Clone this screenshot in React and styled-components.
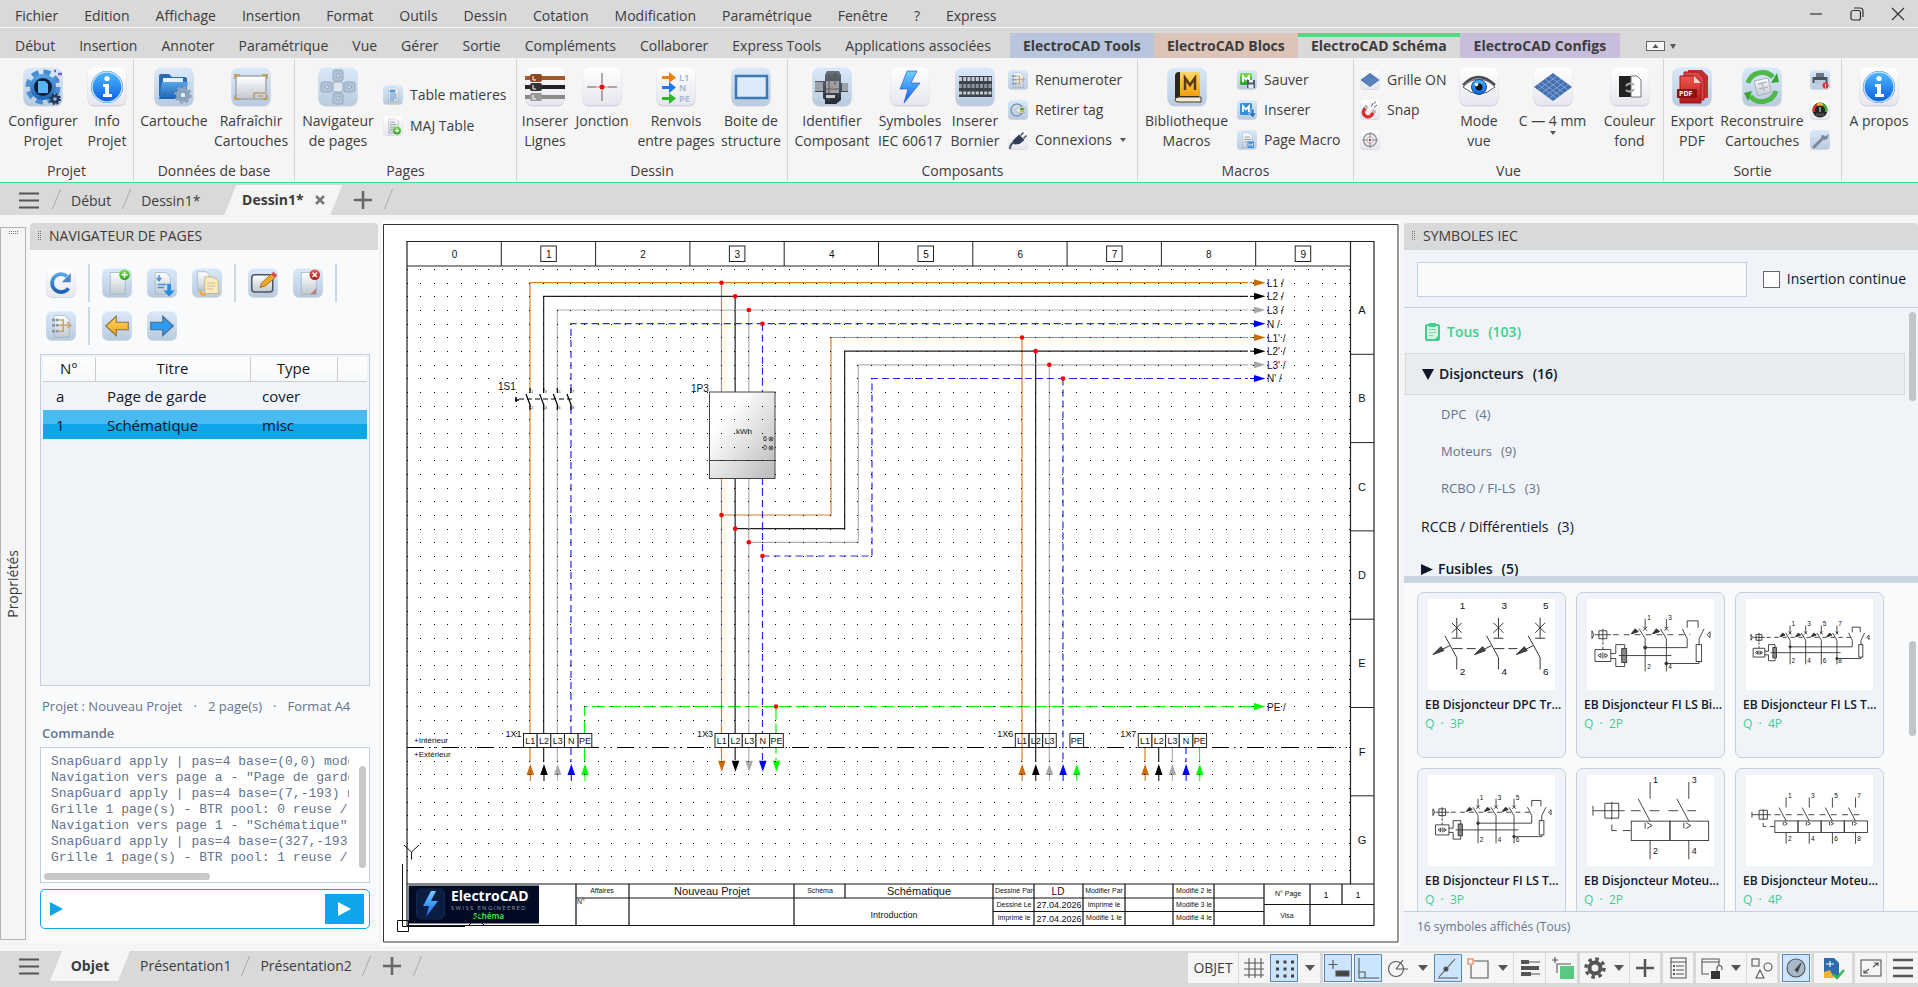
/* eslint-disable react/prop-types */
import { Fragment } from "react";
import styled, { createGlobalStyle, css } from "styled-components";

const menus = [
  "Fichier", "Edition", "Affichage", "Insertion", "Format", "Outils", "Dessin",
  "Cotation", "Modification", "Paramétrique", "Fenêtre", "?", "Express",
];

const ribbonTabs = [
  "Début", "Insertion", "Annoter", "Paramétrique", "Vue", "Gérer", "Sortie",
  "Compléments", "Collaborer", "Express Tools", "Applications associées",
];

const contextTabs = [
  { label: "ElectroCAD Tools", color: "#b9c5dc", width: 144 },
  { label: "ElectroCAD Blocs", color: "#dcc5b8", width: 144 },
  { label: "ElectroCAD Schéma", color: "#d9d9d9", width: 162, active: true },
  { label: "ElectroCAD Configs", color: "#c8bedb", width: 160 },
];

// big: [icon, line 1, line 2, width, dropdown], small: [icon, label, dropdown]
const ribbonGroups = [
  {
    title: "Projet",
    width: 134,
    items: [
      { big: ["config", "Configurer", "Projet", 82] },
      { big: ["info", "Info", "Projet", 46] },
    ],
  },
  {
    title: "Données de base",
    width: 161,
    items: [
      { big: ["folder", "Cartouche", "", 76] },
      { big: ["frame", "Rafraîchir", "Cartouches", 78] },
    ],
  },
  {
    title: "Pages",
    width: 222,
    items: [
      { big: ["navpad", "Navigateur", "de pages", 82] },
      { small: [["doc", "Table matieres"], ["docplus", "MAJ Table"]] },
    ],
  },
  {
    title: "Dessin",
    width: 271,
    items: [
      { big: ["lines", "Inserer", "Lignes", 52] },
      { big: ["cross", "Jonction", "", 62] },
      { big: ["refs", "Renvois", "entre pages", 86] },
      { big: ["box", "Boite de", "structure", 64] },
    ],
  },
  {
    title: "Composants",
    width: 350,
    items: [
      { big: ["component", "Identifier", "Composant", 84] },
      { big: ["bolt", "Symboles", "IEC 60617", 72] },
      { big: ["terminal", "Inserer", "Bornier", 58] },
      {
        small: [
          ["renum", "Renumeroter"],
          ["tag", "Retirer tag"],
          ["plug", "Connexions", true],
        ],
      },
    ],
  },
  {
    title: "Macros",
    width: 216,
    items: [
      { big: ["book", "Bibliotheque", "Macros", 93] },
      { small: [["msave", "Sauver"], ["minsert", "Inserer"], ["mpage", "Page Macro"]] },
    ],
  },
  {
    title: "Vue",
    width: 310,
    items: [
      { small: [["grid", "Grille ON"], ["magnet", "Snap"], ["target", ""]], width: 96 },
      { big: ["eye", "Mode", "vue", 56] },
      { big: ["grid", "C — 4 mm", "", 91, true] },
      { big: ["contrast", "Couleur", "fond", 63] },
    ],
  },
  {
    title: "Sortie",
    width: 178,
    items: [
      { big: ["pdf", "Export", "PDF", 52] },
      { big: ["recycle", "Reconstruire", "Cartouches", 88] },
      { small: [["printer", ""], ["gauge", ""], ["wrench", ""]] },
    ],
  },
  { title: "", items: [{ big: ["info", "A propos", "", 70] }] },
];

const iconLabels = {
  target: "Cible", printer: "Imprimer", gauge: "Performance", wrench: "Réparer",
};

const pageTools = [
  [["refresh", "Rafraîchir"]],
  [["newpage", "Nouvelle page"], ["importpage", "Importer"], ["copypage", "Copier"]],
  [["editpage", "Modifier"], ["delpage", "Supprimer"]],
];

const pageToolsRow2 = [
  [["renum", "Renuméroter"]],
  [["left", "Page précédente"], ["right", "Page suivante"]],
];

const log = `SnapGuard apply | pas=4 base=(0,0) mode=auto
Navigation vers page a - "Page de garde"
SnapGuard apply | pas=4 base=(7,-193) mode=auto
Grille 1 page(s) - BTR pool: 0 reuse / 1 new
Navigation vers page 1 - "Schématique"
SnapGuard apply | pas=4 base=(327,-193) mode=auto
Grille 1 page(s) - BTR pool: 1 reuse / 0 new`;

const categories = [
  { label: "Tous", count: 103, kind: "all" },
  { label: "Disjoncteurs", count: 16, kind: "open" },
  { label: "DPC", count: 4, kind: "sub" },
  { label: "Moteurs", count: 9, kind: "sub" },
  { label: "RCBO / FI-LS", count: 3, kind: "sub" },
  { label: "RCCB / Différentiels", count: 3, kind: "leaf" },
  { label: "Fusibles", count: 5, kind: "closed" },
];

const symbols = [
  { name: "EB Disjoncteur DPC Tripolaire", code: "Q  ·  3P", art: <DpcSymbol /> },
  { name: "EB Disjoncteur FI LS Bipolaire", code: "Q  ·  2P", art: <FiSymbol poles={2} /> },
  { name: "EB Disjoncteur FI LS Tetrapolaire", code: "Q  ·  4P", art: <FiSymbol poles={4} /> },
  { name: "EB Disjoncteur FI LS Tripolaire", code: "Q  ·  3P", art: <FiSymbol poles={3} /> },
  { name: "EB Disjoncteur Moteur Bipolaire", code: "Q  ·  2P", art: <MotorSymbol poles={2} /> },
  { name: "EB Disjoncteur Moteur Tetrapolaire", code: "Q  ·  4P", art: <MotorSymbol poles={4} /> },
];

export default function App() {
  return (
    <Shell>
      <GlobalStyle />
      <Gradients />
      <MenuBar>
        {menus.map((m) => (
          <MenuButton key={m}>{m}</MenuButton>
        ))}
        <WindowButtons>
          <button aria-label="Réduire">
            <svg width="14" height="14"><path d="M1 7h12" /></svg>
          </button>
          <button aria-label="Restaurer">
            <svg width="14" height="14">
              <rect x="1" y="3.5" width="9.5" height="9.5" rx="2" />
              <path d="M4 1h6q3 0 3 3v6" />
            </svg>
          </button>
          <button aria-label="Fermer">
            <svg width="14" height="14"><path d="M1 1l12 12M13 1L1 13" /></svg>
          </button>
        </WindowButtons>
      </MenuBar>
      <TabBar>
        {ribbonTabs.map((t) => (
          <MenuButton key={t} $tight>{t}</MenuButton>
        ))}
        <ContextTabs>
          {contextTabs.map((t) => (
            <ContextTab key={t.label} $color={t.color} $width={t.width} $active={t.active}>
              {t.label}
            </ContextTab>
          ))}
        </ContextTabs>
        <CollapseButton aria-label="Réduire le ruban">
          <svg width="32" height="12">
            <rect x=".5" y="1.5" width="18" height="9" fill="#f5f5f5" stroke="#666" />
            <path d="M9.500 4l3 4h-6z" fill="#555" />
            <path d="M24 4h6l-3 5z" fill="#555" />
          </svg>
        </CollapseButton>
      </TabBar>
      <Ribbon>
        {ribbonGroups.map((g) => (
          <RibbonGroup key={g.title} $width={g.width}>
            <GroupItems>
              {g.items.map((it, i) =>
                it.big ? (
                  <BigItem key={i} data={it.big} />
                ) : (
                  <SmallItems key={i} list={it.small} width={it.width} />
                )
              )}
            </GroupItems>
            <GroupTitle>{g.title}</GroupTitle>
          </RibbonGroup>
        ))}
      </Ribbon>
      <DocTabs>
        <Burger />
        <Slash />
        <DocTab>Début</DocTab>
        <Slash />
        <DocTab $wide>Dessin1*</DocTab>
        <ActiveDocTab>
          <button>Dessin1*</button>
          <button aria-label="Fermer l'onglet">
            <svg width="10" height="10" stroke="#777" strokeWidth="2.500">
              <path d="M1 1l8 8M9 1l-8 8" />
            </svg>
          </button>
        </ActiveDocTab>
        <PlusButton />
        <Slash />
      </DocTabs>

      <Workspace>
        <PropertiesStrip>
          <Grip $width={9} $height={4} />
          <span>Propriétés</span>
        </PropertiesStrip>
        <PageNavigator />
        <Canvas>
          <Schematic />
        </Canvas>
        <SymbolPanel />
      </Workspace>

      <Footer>
        <Burger />
        <LayoutTab $active>Objet</LayoutTab>
        <LayoutTab>Présentation1</LayoutTab>
        <Slash />
        <LayoutTab>Présentation2</LayoutTab>
        <Slash />
        <PlusButton />
        <Slash />
        <StatusTools />
      </Footer>
    </Shell>
  );
}

/****************** ribbon ***************/

function BigItem({ data }) {
  const [icon, line1, line2, width, dropdown] = data;
  return (
    <BigButton $width={width}>
      <Icon name={icon} size={40} />
      <span>{line1}</span>
      {line2 && <span>{line2}</span>}
      {dropdown && <Caret />}
    </BigButton>
  );
}

function SmallItems({ list, width }) {
  return (
    <SmallColumn $width={width} $two={list.length === 2}>
      {list.map(([icon, label, dropdown]) => (
        <SmallButton key={icon} aria-label={label || iconLabels[icon]}>
          <Icon name={icon} size={20} />
          {label}
          {dropdown && <Caret />}
        </SmallButton>
      ))}
    </SmallColumn>
  );
}

function Caret() {
  return (
    <svg width="8" height="5">
      <path d="M1 0h6L4 4z" fill="#555" />
    </svg>
  );
}

function Burger() {
  return (
    <BurgerButton aria-label="Menu">
      <svg width="20" height="17" stroke="#555" strokeWidth="2">
        <path d="M0 1.500h20M0 8.500h20M0 15.500h20" />
      </svg>
    </BurgerButton>
  );
}

function Slash() {
  return (
    <SlashSvg width="9" height="20" stroke="#aaa">
      <path d="M8.500 0L.5 20" />
    </SlashSvg>
  );
}

function PlusButton() {
  return (
    <PlusBtn aria-label="Nouvel onglet">
      <svg width="18" height="18" stroke="#666" strokeWidth="2.500">
        <path d="M9 0v18M0 9h18" />
      </svg>
    </PlusBtn>
  );
}

/****************** page navigator ***************/

function PageNavigator() {
  return (
    <Panel>
      <PanelHeader>
        <Grip $width={4} $height={10} />
        NAVIGATEUR DE PAGES
      </PanelHeader>
      <NavBody>
        {[pageTools, pageToolsRow2].map((row, r) => (
          <ToolRow key={r}>
            {row.map((set, i) => (
              <Fragment key={i}>
                {set.map(([icon, label]) => (
                  <ToolButton key={icon} aria-label={label}>
                    <Icon name={icon} size={30} />
                  </ToolButton>
                ))}
                {(r === 0 || i === 0) && <ToolSep />}
              </Fragment>
            ))}
          </ToolRow>
        ))}
        <TableFrame>
          <PageTable>
            <thead>
              <tr>
                <th>N°</th>
                <th>Titre</th>
                <th>Type</th>
                <th aria-label="Divers" />
              </tr>
            </thead>
            <tbody>
              <tr>
                <td>a</td>
                <td>Page de garde</td>
                <td colSpan="2">cover</td>
              </tr>
              <tr className="selected">
                <td>1</td>
                <td>Schématique</td>
                <td colSpan="2">misc</td>
              </tr>
            </tbody>
          </PageTable>
        </TableFrame>
        <ProjectLine>
          <span>Projet : Nouveau Projet</span>
          <span>·</span>
          <span>2 page(s)</span>
          <span>·</span>
          <span>Format A4</span>
        </ProjectLine>
        <CommandLabel htmlFor="command">Commande</CommandLabel>
        <LogFrame>
          <Log>{log}</Log>
          <VThumb />
          <HThumb />
        </LogFrame>
        <CommandBar>
          <svg width="13" height="14"><path d="M0 0l13 7-13 7z" fill="#0ea5e9" /></svg>
          <input id="command" />
          <button aria-label="Exécuter">
            <svg width="13" height="14"><path d="M0 0l13 7-13 7z" fill="#fff" /></svg>
          </button>
        </CommandBar>
      </NavBody>
    </Panel>
  );
}

/****************** symbols ***************/

function SymbolPanel() {
  return (
    <Panel $wide>
      <PanelHeader>
        <Grip $width={4} $height={10} />
        SYMBOLES IEC
      </PanelHeader>
      <SearchRow>
        <input type="text" aria-label="Rechercher un symbole" />
        <label>
          <input type="checkbox" />
          Insertion continue
        </label>
      </SearchRow>
      <Tree>
        {categories.map((c) => (
          <TreeRow key={c.label} $kind={c.kind}>
            {c.kind === "all" && (
              <svg width="15" height="18" viewBox="0 0 15 18">
                <rect x="1" y="2" width="13" height="15" rx="1" fill="#d5f3e2" stroke="#3ecf8e" strokeWidth="2" />
                <rect x="4" y="0" width="7" height="4" rx="1" fill="#3ecf8e" />
                <path d="M4 6.500h7M4 9.500h7M4 12.500h4" stroke="#7cd9a8" />
                <path d="M10 16l4-4v4z" fill="#3ecf8e" />
              </svg>
            )}
            {c.kind === "open" && (
              <svg width="12" height="11"><path d="M0 0h12L6 11z" fill="#0f172a" /></svg>
            )}
            {c.kind === "closed" && (
              <svg width="12" height="11"><path d="M0 0l12 5.500L0 11z" fill="#0f172a" /></svg>
            )}
            <span>{c.label}</span>
            <span>({c.count})</span>
          </TreeRow>
        ))}
        <ScrollThumb $top={4} $height={89} />
      </Tree>
      <Splitter />
      <Gallery>
        <Cards>
          {symbols.map((s) => (
            <Card key={s.name}>
              <svg viewBox="0 0 128 92">{s.art}</svg>
              <strong>{s.name}</strong>
              <small>{s.code}</small>
            </Card>
          ))}
        </Cards>
        <ScrollThumb $top={58} $height={95} />
      </Gallery>
      <PanelStatus>16 symboles affichés (Tous)</PanelStatus>
    </Panel>
  );
}

function DpcSymbol() {
  return (
    <g fill="none" stroke="#333" fontSize="10">
      {[29, 71, 113].map((x, i) => (
        <g key={x}>
          <path d={`M${x} 19v20M${x - 5} 24l10 10M${x + 5} 24l-10 10M${x - 5} 39.500h10`} />
          <path d={`M${x - 12} 37L${x} 59v12M${x - 7} 47l-10 5`} />
          <path d={`M${x - 24} 56l8-8 3 4z`} fill="#444" />
          {i < 2 && <path d={`M${x - 4} 50h10m4 0h9`} />}
          <Label x={x + 3} y={10}>{i * 2 + 1}</Label>
          <Label x={x + 3} y={77}>{i * 2 + 2}</Label>
        </g>
      ))}
    </g>
  );
}

function FiSymbol({ poles }) {
  const extra = (poles - 2) * 21.4;
  const scale = 119 / (119 + extra);
  const last = 80 + extra;
  return (
    <g
      transform={`translate(${5 - 5 * scale} ${46 - 45 * scale}) scale(${scale})`}
      fill="none"
      stroke="#333"
      strokeWidth={0.9 / scale}
      fontSize={6.5 / scale}
    >
      <path d="M5 31v8l2-4zM8 35h4M12 31h8v8h-8zM12 35h12M16 29v12" />
      <path d={`M26 35H${last + 24}`} strokeDasharray="6 5" />
      <path d="M16 42v8" strokeDasharray="3 2" />
      <path d="M8 50h16v12H8zM11 56l3-2v4zM21 56l-3-2v4zM16 53v6" />
      <path d="M24 54h5v-9h9v4M24 59h5v8h9v-4" />
      <rect x="35" y="49" width="5" height="14" fill="#888" />
      <path d={`M32 56h${last - 27}`} />
      {Array.from({ length: poles }, (_, i) => {
        const x = 58.600 + i * 21.4;
        return (
          <g key={i}>
            <path d={`M${x} 19v10M${x - 2} 27l4 4m0-4l-4 4M${x - 6} 29l6 10v33M${x - 7} 31l-6 3`} />
            <path d={`M${x - 14} 34l4-5 3 3z`} fill="#333" />
            <Label x={x + 2} y={20}>{i * 2 + 1}</Label>
            <Label x={x + 2} y={70}>{i * 2 + 2}</Label>
          </g>
        );
      })}
      <circle cx="58.600" cy="48" r="1.500" fill="#333" />
      <circle cx={last} cy="64" r="1.500" fill="#333" />
      <path d={`M58.600 48H${last + 21}v-9l-5-10M${last + 21} 28v-7h11v7M${last + 38} 29l-5 10v6M${last + 33} 62v2H${last}`} />
      <rect x={last + 30} y="45" width="5.500" height="17" />
      <path d={`M${last + 41} 35l3-3v6z`} />
    </g>
  );
}

function MotorSymbol({ poles }) {
  const extra = (poles - 2) * 39;
  const scale = 116 / (116 + extra);
  return (
    <g
      transform={`translate(${6 - 6 * scale} ${46 - 45 * scale}) scale(${scale})`}
      fill="none"
      stroke="#333"
      strokeWidth={0.9 / scale}
      fontSize={poles > 2 ? 11 : 9}
    >
      <path d="M6 30v10M6 35h32M18 27.500h14v15H18zM25 26v18" />
      <path d={`M44 35H${110 + extra}`} strokeDasharray="10 9" />
      <path d="M25 49v6h5m6 0h8" />
      {Array.from({ length: poles }, (_, i) => {
        const x = 63.600 + i * 39;
        return (
          <g key={i}>
            <path d={`M${x} 6v17M${x - 12} 23l12 22.500M${x} 65v19`} />
            <rect x={x - 19} y="45.500" width="39" height="19.500" />
            <path d={`M${x - 5} 47v6m2-6l5 3-5 3`} />
            <Label x={x + 3} y={7}>{i * 2 + 1}</Label>
            <Label x={x + 3} y={79}>{i * 2 + 2}</Label>
          </g>
        );
      })}
    </g>
  );
}

/****************** schematic sheet ***************/

const ORANGE = "#cc6a0a";
const BLACK = "#000";
const GREY = "#a8a8a8";
const BLUE = "#0000ff";
const GREEN = "#00ff00";
const STEP = 13.66;
const phases = [
  { name: "L1", color: ORANGE, wire: "#d98026" },
  { name: "L2", color: BLACK, wire: "#222" },
  { name: "L3", color: GREY, wire: "#b0b0b0" },
  { name: "N", color: BLUE, wire: "#2a2aff", dash: "7 4" },
  { name: "PE", color: GREEN, wire: GREEN, dash: "13 4" },
];

const titleLines =
  "M407 884H1374M407 925.500H1374M576 884V925.500M629 884V925.500M794 884V925.500M845 884V898" +
  "M993 884V925.500M1034 884V925.500M1083 884V925.500M1125 884V925.500M1173 884V925.500" +
  "M1214 884V925.500M1264 884V925.500M1310 884V925.500M1342 884V904.500M576 898H1264" +
  "M993 911.500H1264M1264 904.500H1374";

const titleTexts = [
  [602, 893, "Affaires", 7], [581, 904, "N°", 7], [712, 895, "Nouveau Projet", 11],
  [820, 893, "Schéma", 7], [919, 895, "Schématique", 11], [894, 918, "Introduction", 9],
  [1014, 893, "Dessiné Par", 7], [1014, 907, "Dessiné Le", 7], [1014, 920, "Imprimé le", 7],
  [1058, 895, "LD", 10], [1059, 908, "27.04.2026", 9], [1059, 922, "27.04.2026", 9],
  [1104, 893, "Modifier Par", 7], [1104, 907, "Imprimé le", 7], [1104, 920, "Modifié 1 le", 7],
  [1194, 893, "Modifié 2 le", 7], [1194, 907, "Modifié 3 le", 7], [1194, 920, "Modifié 4 le", 7],
  [1288, 896, "N° Page", 7], [1287, 918, "Visa", 7], [1326, 898, "1", 9], [1358, 898, "1", 9],
];

function Schematic() {
  return (
    <Sheet viewBox="383 220 1016 726" preserveAspectRatio="xMidYMid meet">
      <defs>
        <linearGradient id="meter" x1="0" y1="0" x2="1" y2="1">
          <stop offset=".25" stopColor="#fff" />
          <stop offset="1" stopColor="#b9b9b9" />
        </linearGradient>
      </defs>
      <path d="M383.500 942V224.500H1398V942z" fill="none" stroke="#333" />
      <path d="M407 925.500V241.500H1374V925.500M407 266H1350M1350.500 241.500V884" fill="none" stroke="#222" strokeWidth="1.200" />

      {Array.from({ length: 10 }, (_, i) => {
        const left = 407 + i * 94.3;
        const boxed = i % 2 === 1;
        return (
          <g key={i}>
            {i > 0 && <path d={`M${left} 241.500V266`} stroke="#222" />}
            {boxed && <rect x={left + 39.500} y="246" width="15.500" height="15.500" fill="none" stroke="#222" />}
            <Label x={left + 47.500} y="257.500" size={10} anchor="middle">{i}</Label>
          </g>
        );
      })}
      {["A", "B", "C", "D", "E", "F", "G"].map((c, i) => (
        <g key={c}>
          {i > 0 && <path d={`M1350 ${266 + i * 88.3}H1374`} stroke="#222" />}
          <Label x="1362" y={314 + i * 88.3} size={11} anchor="middle">{c}</Label>
        </g>
      ))}

      {/* wires */}
      <g fill="none">
        {phases.slice(0, 4).map((p, i) => {
          const a = 530 + i * STEP;
          const b = 721.5 + i * STEP;
          const c = 1022 + i * STEP;
          const y = 282.7 + i * STEP;
          const y2 = 337.5 + i * STEP;
          return (
            <g key={p.name} stroke={p.wire} strokeDasharray={p.dash} strokeWidth="1.200">
              <path d={`M${a} 391V${y}H1248`} />
              <path d={`M${a} 407V762`} />
              <path d={`M${b} ${y}V392M${b} 478V760`} />
              <path d={`M${b} ${515 + i * STEP}H${831 + i * STEP}V${y2}H1248`} />
              <path d={`M${c} ${y2}V762`} />
              <path d={`M${1145 + i * STEP} 747V762`} />
            </g>
          );
        })}
        <path d="M584.500 733V706.500H1250M776 706.500V760" stroke={GREEN} strokeWidth="1.200" strokeDasharray="13 4" />
        <path d="M584.500 747V762M1199.600 747V762" stroke={GREEN} />
      </g>
      {phases.slice(0, 4).map((p, i) => (
        <g key={p.name}>
          <OutArrow y={282.7 + i * STEP} color={p.color} label={`${p.name} /`} />
          <OutArrow y={337.5 + i * STEP} color={p.color} label={`${p.name}' /`} />
        </g>
      ))}
      <OutArrow y={706.5} color={GREEN} label="PE /" />

      {/* terminals */}
      <path d="M407 747.500H1350" stroke="#000" strokeDasharray="17 5 1.500 5 1.500 5" />
      <Terminals x={523.5} name="1X1" />
      <Terminals x={715} name="1X3" down />
      <Terminals x={1015.3} name="1X6" open />
      <Terminals x={1138.3} name="1X7" />
      <Label x="414" y="743" size={8}>+Intérieur</Label>
      <Label x="414" y="757" size={8}>+Extérieur</Label>

      <GridDots top={0} rows={45} cols={70} />

      {/* 4-pole switch */}
      <Label x="498" y="390" size={10}>1S1</Label>
      <path d="M519 399H572" stroke="#000" strokeDasharray="5 3" />
      <path d="M515 400h4M516 397v5" stroke="#000" strokeWidth="1.500" />
      {[0, 1, 2, 3].map((i) => {
        const x = 530 + i * STEP;
        return (
          <g key={i}>
            <path d={`M${x - 4} 394l4.500 12M${x} 388v5M${x} 405v5`} stroke="#000" strokeWidth="1.200" />
            <Label x={x + 1} y="393" size={4}>{i * 2 + 1}</Label>
            <Label x={x + 1} y="409" size={4}>{i * 2 + 2}</Label>
          </g>
        );
      })}

      {/* energy meter */}
      <rect x="709.500" y="392" width="65.500" height="86.500" fill="url(#meter)" stroke="#444" />
      <path d="M709.500 460.500H775" stroke="#444" />
      <GridDots top={10} rows={5} left={23} cols={4} />
      <Label x="691" y="392" size={10}>1P3</Label>
      <Label x="744" y="434" size={8} anchor="middle">kWh</Label>
      <Label x="763" y="441" size={7}>6</Label>
      <Label x="763" y="450" size={7}>0</Label>
      <g fill="none" stroke="#444" strokeWidth=".8">
        <circle cx="771" cy="439" r="2" />
        <circle cx="771" cy="448" r="2" />
        <path d="M769 437l4 4m0-4l-4 4M769 446l4 4m0-4l-4 4" />
      </g>

      <g fill="#f00">
        {[0, 1, 2, 3].map((i) => (
          <g key={i}>
            <circle cx={721.5 + i * STEP} cy={282.7 + i * STEP} r="2.300" />
            <circle cx={721.5 + i * STEP} cy={515 + i * STEP} r="2.300" />
            <circle cx={1022 + i * STEP} cy={337.5 + i * STEP} r="2.300" />
          </g>
        ))}
        <circle cx="776" cy="706.500" r="2.300" />
      </g>

      {/* title block */}
      <path d={titleLines} fill="none" stroke="#111" strokeWidth="1.200" />
      {titleTexts.map(([x, y, text, size]) => (
        <Label key={`${x}-${y}`} x={x} y={y} size={size} anchor="middle">{text}</Label>
      ))}
      <rect x="408.500" y="885.500" width="130.500" height="38" fill="#020b24" />
      <rect x="416.500" y="889" width="28" height="30" rx="5" fill="#0b1d42" stroke="#12284f" />
      <path d="M431 891l-8 15h6l-3 11 12-16h-7l5-10z" fill="url(#boltFill)" />
      <text x="451" y="901" fontFamily="Open Sans" fontSize="14" fontWeight="700" fill="#fff">ElectroCAD</text>
      <text x="451" y="910" fontFamily="Open Sans" fontSize="6" letterSpacing="1.300" fill="#8a94ab">SWISS ENGINEERED</text>
      <text x="473" y="919" fontFamily="Open Sans" fontSize="8" fontWeight="700" fill="#3ddc3d">Schéma</text>

      {/* UCS marker */}
      <path
        d="M404 845l7.500 7 7.500-7M411.500 852v7.500M402.500 864V926.500H465M397.500 920.500h11v11h-11zM469 911l15 14m0-14l-15 14"
        fill="none"
        stroke="#111"
      />
    </Sheet>
  );
}

// snap grid, one pixel per node
function GridDots({ top, rows, left = 0, cols }) {
  const d = [];
  for (let r = 0; r < rows; r++) {
    for (let c = 0; c < cols; c++) {
      const x = Math.round(406.5 + (left + c) * STEP);
      const y = Math.round(269 + (top + r) * STEP);
      d.push(`M${x} ${y}h1v1h-1z`);
    }
  }
  return <path d={d.join("")} fill="#000" />;
}

function Label({ x, y, size, anchor, children }) {
  return (
    <text x={x} y={y} fontSize={size} textAnchor={anchor} fill="#111" stroke="none" fontFamily="Liberation Sans, Arial, sans-serif">
      {children}
    </text>
  );
}

function OutArrow({ y, color, label }) {
  return (
    <g>
      <path d={`M1250 ${y}h5`} stroke={color} />
      <path d={`M1254 ${y - 3.500}l11.500 3.500-11.500 3.500z`} fill={color} />
      <Label x="1267" y={y + 4} size={10}>{label}</Label>
    </g>
  );
}

function Terminals({ x, name, down, open }) {
  return (
    <g>
      <Label x={x - 18} y="737" size={9}>{name}</Label>
      {phases.map((p, i) => {
        const left = x + i * STEP;
        const mid = left + STEP / 2;
        const hidden = open && p.name === "N";
        return (
          <g key={p.name}>
            {!hidden && (
              <>
                <rect x={left} y="733.500" width={STEP} height="14" fill={open ? "none" : "#fff"} stroke="#222" />
                <Label x={mid} y="744" size={9} anchor="middle">{p.name}</Label>
              </>
            )}
            {down ? (
              <path d={`M${mid - 3.800} 760.700h7.600l-3.800 11z`} fill={p.color} />
            ) : (
              <>
                <path d={`M${mid - 3.800} 775h7.600l-3.800-11z`} fill={p.color} />
                <path d={`M${mid} 775v6`} stroke={p.color} />
              </>
            )}
          </g>
        );
      })}
    </g>
  );
}

/****************** status tools ***************/

function StatusTools() {
  return (
    <Status>
      <StatusCell $width={50}><StatusButton>OBJET</StatusButton></StatusCell>
      <StatusCell $width={81}>
        <Tool label="Grille"><path d="M9 4v20M15 4v20M21 4v20M4 9h20M4 15h20M4 21h20" /></Tool>
        <Tool label="Résolution" active>
          <path d="M6 8h18M6 15h18M6 22h18" strokeWidth="3" strokeDasharray="3 4.500" stroke="#444" />
        </Tool>
        <DropArrow />
      </StatusCell>
      <StatusCell $width={190} $gap>
        <Tool label="Saisie dynamique" active>
          <path d="M9 6v9M4.500 10.500h9" />
          <rect x="12" y="17" width="13" height="5" fill="#444" />
        </Tool>
        <Tool label="Ortho" active><path d="M5 4v20h20M5 18h6v6" /></Tool>
        <Tool label="Polaire"><circle cx="12" cy="15" r="7.500" /><path d="M12 15h12M12 15l7-9" /></Tool>
        <DropArrow />
        <Tool label="Accrochage" active>
          <path d="M4 24h20M5 23L21 5" />
          <circle cx="12" cy="15" r="2" fill="#444" />
        </Tool>
        <Tool label="Accrochage objet">
          <path d="M10 7h14v17H7V11" />
          <rect x="4" y="5" width="5" height="5" stroke="#e0763a" fill="#fff" />
        </Tool>
        <DropArrow />
      </StatusCell>
      <StatusCell $width={31}>
        <Tool label="Épaisseur"><path d="M5 8h8M5 14h18M5 20h10" strokeWidth="4" /><path d="M13 8h11M15 20h9" /></Tool>
      </StatusCell>
      <StatusCell $width={31}>
        <Tool label="Cycle">
          <path d="M7 3v6M4 6h6M9 19V10h14" />
          <rect x="12" y="12" width="14" height="13" fill="#58c982" stroke="none" />
        </Tool>
      </StatusCell>
      <StatusCell $width={49} $gap>
        <Tool label="Paramètres">
          <circle cx="14" cy="14" r="5.500" strokeWidth="4" />
          <circle cx="14" cy="14" r="9" strokeWidth="3.500" strokeDasharray="3.500 3.570" />
        </Tool>
        <DropArrow />
      </StatusCell>
      <StatusCell $width={30}>
        <Tool label="Annotation"><path d="M14 5v18M5 14h18" strokeWidth="2.500" /></Tool>
      </StatusCell>
      <StatusCell $width={30} $gap>
        <Tool label="Propriétés rapides">
          <path d="M7 4h15v20H7zM7 8h15M12 12h8M12 16h8M12 20h8" />
          <path d="M9 12h2M9 16h2M9 20h2" strokeWidth="2" />
        </Tool>
      </StatusCell>
      <StatusCell $width={50} $gap>
        <Tool label="Verrouillage">
          <path d="M12 20H5V5h17v6M5 8h17" />
          <rect x="14" y="17" width="9" height="8" fill="#333" stroke="none" />
          <path d="M20 17v-3a2.500 2.500 0 015 0v2" />
        </Tool>
        <DropArrow />
      </StatusCell>
      <StatusCell $width={30}>
        <Tool label="Isoler">
          <rect x="4" y="5" width="7" height="7" />
          <circle cx="20" cy="13" r="4" />
          <path d="M12 16l4 8H8z" />
        </Tool>
      </StatusCell>
      <StatusCell $width={31} $gap>
        <Tool label="Performances" active>
          <circle cx="14" cy="14" r="9" fill="#a9b8c9" />
          <path d="M13 16l6-7-3.500 9z" fill="#333" />
        </Tool>
      </StatusCell>
      <StatusCell $width={38} $gap>
        <Tool label="Vérification">
          <path d="M5 4h10l5 5v13H5z" fill="#2f6ba8" stroke="none" />
          <path d="M5 18l6-2 4 8H5z" fill="#f2b233" stroke="none" />
          <path d="M7 10h8M11 7v6" stroke="#fff" />
          <path d="M14 20l4 4 7-8" stroke="#35b455" strokeWidth="2.500" />
        </Tool>
      </StatusCell>
      <StatusCell $width={31} $gap>
        <Tool label="Plein écran">
          <rect x="4" y="6" width="20" height="16" />
          <path d="M16 13l5-4M17 9h4v3M12 15l-5 4M11 19H7v-3" />
        </Tool>
      </StatusCell>
      <StatusCell $width={31}>
        <Tool label="Personnaliser"><path d="M4 6h20M4 14h20M4 22h20" strokeWidth="2.500" /></Tool>
      </StatusCell>
    </Status>
  );
}

function Tool({ label, active, children }) {
  return (
    <StatusButton aria-label={label} $active={active}>
      <svg width="28" height="28" viewBox="0 0 28 28" fill="none" stroke="#555" strokeWidth="1.100">
        {children}
      </svg>
    </StatusButton>
  );
}

function DropArrow() {
  return (
    <StatusButton aria-label="Options" $slim>
      <svg width="10" height="6"><path d="M0 0h10L5 6z" fill="#555" /></svg>
    </StatusButton>
  );
}

/****************** icons (40 x 40 tiles) ***************/

function Gradients() {
  const list = [
    ["tile", "#d9e9f9", "#b9cbe0"],
    ["tileWhite", "#ffffff", "#e6e6ee"],
    ["blue", "#5aa5e6", "#1c62b4"],
    ["sky", "#4db8ff", "#0a5fe0"],
    ["silver", "#ffffff", "#c2c9d2"],
    ["gold", "#ffd76a", "#f0a010"],
    ["red", "#f2564d", "#b01818"],
    ["green", "#7ddb4f", "#2f9f28"],
    ["dark", "#6a7078", "#24282e"],
    ["boltFill", "#6fd0ff", "#1560ee"],
  ];
  return (
    <HiddenSvg aria-hidden="true">
      <defs>
        {list.map(([id, from, to]) => (
          <linearGradient key={id} id={id} x1="0" y1="0" x2="0" y2="1">
            <stop stopColor={from} />
            <stop offset="1" stopColor={to} />
          </linearGradient>
        ))}
      </defs>
    </HiddenSvg>
  );
}

const page = <path d="M11 6h14l6 6v23H11z" fill="url(#silver)" stroke="#9fb0c4" />;
const rhombus = (
  <>
    <path d="M20 6l19 14-19 14L1 20z" fill="#4470b0" />
    <path
      d="M16 9l19 14M12 12l19 14M8.500 15l19 14M5 17.500l19 14M24 9L5 23M28 12L9 26M31.500 15l-19 14M35 17.500l-19 14"
      stroke="#7fa6d8"
    />
  </>
);
const badgeM = (fill) => (
  <>
    <rect x="6" y="6" width="24" height="24" rx="3" fill={fill} />
    <path d="M12 24V12l6 7 6-7v12" fill="none" stroke="#fff" strokeWidth="3.500" />
  </>
);

// [white tile, drawing]
const icons = {
  config: [false, <>
    <circle cx="20" cy="20" r="15" fill="none" stroke="#4a8fd0" strokeWidth="5" strokeDasharray="7 4.780" />
    <circle cx="20" cy="20" r="13" fill="url(#blue)" />
    <circle cx="20" cy="20" r="9" fill="#0d1e38" />
    <path d="M15 14h7l3 3v9H15z" fill="#57b4f5" />
    <circle cx="32" cy="32" r="4.500" fill="#253858" stroke="#253858" strokeWidth="3" strokeDasharray="2 1.500" />
    <circle cx="32" cy="32" r="1.800" fill="#8fb8e8" />
    <path d="M31 4h2M35 7h4M34 13h2" stroke="#8a55d8" strokeWidth="2.500" />
  </>],
  info: [true, <>
    <circle cx="20" cy="20" r="16" fill="#0b55b8" />
    <circle cx="20" cy="20" r="15" fill="url(#sky)" stroke="#bfe2ff" strokeWidth="1.500" />
    <circle cx="20" cy="11.500" r="2.600" fill="#fff" />
    <path d="M16 17h6v10h3v3h-9v-3h2v-7h-2z" fill="#fff" />
  </>],
  folder: [false, <>
    <path d="M5 9q0-2 2-2h8l3 3h13q2 0 2 2v17H5z" fill="#2b6cb0" />
    <path d="M9 11h20v10H9z" fill="#e5f0fb" />
    <path d="M5 32l3-17h26l-3 17z" fill="url(#blue)" />
    <circle cx="29" cy="28" r="5" fill="none" stroke="#8fa3bb" strokeWidth="4" />
    <circle cx="29" cy="28" r="7.500" fill="none" stroke="#8fa3bb" strokeWidth="2.500" strokeDasharray="3 2.900" />
    <circle cx="29" cy="28" r="2.500" fill="#e5edf5" />
  </>],
  frame: [false, <>
    <rect x="5" y="9" width="30" height="23" rx="2" fill="url(#silver)" stroke="#a8a8a8" strokeWidth="1.500" />
    <path d="M4 12V8h5M31 8h5v4M36 28v4h-5M9 32H4v-4" fill="none" stroke="#c2a060" strokeWidth="1.800" />
    <path d="M23 31v-5h11M27 29h5" fill="none" stroke="#b08a3e" strokeWidth="1.200" />
  </>],
  navpad: [false, <g fill="#b3c3d5" stroke="#93a8c0">
    <rect x="15" y="3" width="10" height="11" rx="2" />
    <rect x="15" y="26" width="10" height="11" rx="2" />
    <rect x="3" y="15" width="11" height="10" rx="2" />
    <rect x="26" y="15" width="11" height="10" rx="2" />
    <rect x="15" y="15" width="10" height="10" rx="2" fill="#dfe5ec" />
    <path d="M20 6l2 4h-4zM20 34l2-4h-4zM6 20l4-2v4zM34 20l-4-2v4z" fill="#f4f8fc" />
  </g>],
  doc: [false, <>{page}<path d="M14 10h10v4H14zM14 18h13M14 22h13M14 26h13M14 30h8" stroke="#5a9bdc" strokeWidth="2" fill="#5a9bdc" /></>],
  docplus: [true, <>{page}<path d="M14 12h10M14 17h13M14 22h9M14 27h6" stroke="#9aa8a0" strokeWidth="2" /><circle cx="28" cy="29" r="8" fill="url(#green)" /><path d="M28 25v8M24 29h8" stroke="#fff" strokeWidth="2.500" /></>],
  lines: [true, <>
    <path d="M0 11h40" stroke="#a05a30" strokeWidth="4" />
    <path d="M0 20h40" stroke="#222" strokeWidth="4" />
    <path d="M0 30h40" stroke="#8a8a8a" strokeWidth="4" />
    <rect x="5" y="7" width="12" height="8" rx="2" fill="#8b4a24" />
    <rect x="5" y="16" width="12" height="8" rx="2" fill="#333" />
    <rect x="5" y="26" width="12" height="8" rx="2" fill="#999" />
    <path d="M8 9v4h3M8 18v4h3M8 28v4h3" stroke="#fff" fill="none" />
  </>],
  cross: [true, <>
    <path d="M20 6v10M20 24v10M5 20h9M26 20h9" stroke="#8f8f94" strokeWidth="1.500" />
    <path d="M20 14v12M12 20h16" stroke="#e88" />
    <circle cx="20" cy="20" r="2.500" fill="#e01010" />
  </>],
  refs: [true, <>
    <path d="M6 9h7V5l7 5.500-7 5.500v-4H6z" fill="#f08010" />
    <path d="M6 19h7v-4l7 5.500-7 5.500v-4H6z" fill="#1f78f0" />
    <path d="M6 30h7v-4l7 5.500-7 5.500v-4H6z" fill="#28b828" />
    <g fontFamily="Open Sans" fontSize="9" fontWeight="700" fill="#a4bbd6">
      <text x="23" y="14">L1</text>
      <text x="23" y="24">N</text>
      <text x="23" y="35">PE</text>
    </g>
  </>],
  box: [false, <rect x="5" y="9" width="31" height="22" fill="#dceafb" stroke="#3e79b5" strokeWidth="2.500" />],
  component: [false, <>
    <path d="M15 4h12l2 4v8h7v9h-7v8l-5 4H13v-4l-2-2v-6H3V14h10V8z" fill="url(#dark)" />
    <path d="M3 15h8v9H3zM30 16h6v8h-6z" fill="#9aa1a9" />
    <path d="M14 14h13v12H14z" fill="#9ba2aa" />
    <path d="M17 8v26M23 6v12M11 22h17" stroke="#50565e" />
    <circle cx="20" cy="20" r="1.800" fill="#e08040" />
    <path d="M14 28h9v3h-9z" fill="#c9ced4" />
  </>],
  bolt: [true, <path d="M17 4L10 22h8l-4 14 16-20h-9l6-12z" fill="url(#boltFill)" stroke="#1550c0" strokeWidth=".6" />],
  terminal: [false, <>
    <rect x="4" y="9" width="33" height="21" fill="#3c424a" />
    <path d="M4 12h33" stroke="#c4ccd4" strokeWidth="4" strokeDasharray="3 1.200" />
    <path d="M4 19h33" stroke="#8b939c" strokeWidth="4" strokeDasharray="3 1.200" />
    <path d="M4 26h33" stroke="#c4ccd4" strokeWidth="3" strokeDasharray="3 1.200" />
  </>],
  renum: [false, <>
    {page}
    <path d="M8 12h9M8 19h9M8 27h9" stroke="#8a96a5" strokeWidth="3.500" strokeDasharray="4 1" />
    <path d="M18 12h5v15h-5M18 19h13M28 15l5 4-5 4" fill="none" stroke="#c9a468" strokeWidth="2" />
  </>],
  tag: [false, <>
    <circle cx="18" cy="20" r="12" fill="none" stroke="#8195ad" strokeWidth="3" />
    <path d="M20 14h14v12H20l-5-6z" fill="#e5e9ee" stroke="#8195ad" />
    <path d="M24 16h8v4h-8z" fill="#4aa858" />
    <path d="M24 20h8v5h-8z" fill="#e8b23c" />
  </>],
  plug: [true, <>
    <path d="M4 38q0-10 8-13" fill="none" stroke="#44506a" strokeWidth="4" />
    <path d="M9 22L22 9l11 11-10 8-10 1z" fill="#303c58" />
    <path d="M25 11l6-6M31 17l6-6" stroke="#44506a" strokeWidth="3" />
  </>],
  book: [false, <>
    <path d="M8 9q0-4 4-4h20v25H12q-4 0-4 3z" fill="#2b2620" />
    <path d="M13 5h20v24H13z" fill="url(#gold)" />
    <path d="M8 33q0-3 4-3h22v5H12q-4 0-4-2z" fill="#f1ead8" stroke="#4a3a22" />
    <path d="M18 23V11l5 7 5-7v12" fill="none" stroke="#5a3a10" strokeWidth="2.500" />
  </>],
  msave: [false, <>{badgeM("url(#green)")}<path d="M20 20h16v16H20z" fill="#4a5a70" /><path d="M24 20h8v5h-8zM23 29h10v7H23z" fill="#e5eaf0" /></>],
  minsert: [false, <>{badgeM("#2f8fe0")}<path d="M28 18v8h-5l8 10 8-10h-5v-8z" fill="#2a78c8" stroke="#fff" /></>],
  mpage: [false, <>{page}<path d="M15 14h11M15 19h13M15 24h8" stroke="#9aa" strokeWidth="2" /><rect x="21" y="23" width="13" height="13" rx="2" fill="#3a8fdd" /><path d="M24 33v-6l3.500 4 3.500-4v6" fill="none" stroke="#fff" strokeWidth="1.500" /></>],
  grid: [true, rhombus],
  magnet: [true, <>
    <path d="M12 14l-4 6a9 9 0 0016 9l4-6" fill="none" stroke="#d93030" strokeWidth="7" />
    <path d="M10 17l4-6M26 26l4-6" stroke="#b5bcc5" strokeWidth="7" />
    <path d="M26 6l-3 7M34 10l-6 5M30 3v4" stroke="#555" strokeWidth="2" />
  </>],
  target: [true, <>
    <circle cx="20" cy="20" r="13" fill="none" stroke="#9a9aa2" strokeWidth="3" />
    <circle cx="20" cy="20" r="7" fill="none" stroke="#b0b0b8" strokeWidth="1.500" />
    <path d="M20 4v12M20 24v12M4 20h12M24 20h12" stroke="#888" strokeWidth="2" />
    <circle cx="20" cy="20" r="2.500" fill="#d04040" />
  </>],
  eye: [true, <>
    <path d="M4 20Q20 4 36 20Q20 34 4 20z" fill="#fff" stroke="#5a5a60" />
    <path d="M4 18Q19 2 36 18" fill="none" stroke="#4a4a50" strokeWidth="2.500" />
    <circle cx="20" cy="20" r="7.500" fill="url(#sky)" stroke="#1c4a80" />
    <circle cx="20" cy="20" r="3.500" fill="#0a1420" />
    <circle cx="17.500" cy="17.500" r="1.700" fill="#fff" />
  </>],
  contrast: [true, <>
    <rect x="9" y="9" width="12" height="21" fill="#222" />
    <path d="M21 9h6l4 4v17H21z" fill="#fff" stroke="#777" />
    <path d="M16 19a5 5 0 018-1M24 22a5 5 0 01-8 1" fill="none" stroke="#aaa" strokeWidth="2" />
  </>],
  pdf: [false, <>
    <path d="M16 3h14l6 6v22H16z" fill="#c03030" />
    <path d="M12 5h14l6 6v22H12z" fill="#d84545" stroke="#a82020" />
    <path d="M8 9h14l7 6v21H8z" fill="url(#red)" stroke="#a01818" />
    <path d="M22 9v7h7z" fill="#fbd5d2" />
    <rect x="5" y="22" width="20" height="9" rx="1" fill="#8e1010" />
    <text x="7" y="29" fontFamily="Open Sans" fontSize="7" fontWeight="700" fill="#fff">PDF</text>
  </>],
  recycle: [false, <>
    <path d="M6 16A15 15 0 0131 10" fill="none" stroke="#4fb848" strokeWidth="5" />
    <path d="M34 24A15 15 0 018 29" fill="none" stroke="#4fb848" strokeWidth="5" />
    <path d="M29 16l8-1-2-9zM10 24l-8 2 4 8z" fill="#3ca236" />
    <path d="M12 14l14-3 3 14-13 4z" fill="url(#silver)" stroke="#a8b0ba" />
    <path d="M16 17l9-2M17 22l9-2M20 16l2 8" stroke="#b0b8c2" strokeWidth="1.500" />
  </>],
  printer: [false, <>
    <path d="M12 6h16v9H12z" fill="#6a7480" />
    <path d="M5 14h30v12H5z" fill="#4a525e" />
    <path d="M9 20h22v9H9z" fill="#b8c8da" />
    <circle cx="31" cy="31" r="6" fill="#e03030" />
    <path d="M31 28v4M31 33v2" stroke="#fff" strokeWidth="2" />
  </>],
  gauge: [true, <>
    <circle cx="20" cy="20" r="15" fill="#222" />
    <path d="M8 24a12 12 0 016-14" fill="none" stroke="#e03030" strokeWidth="5" />
    <path d="M14 10a12 12 0 0112 0" fill="none" stroke="#e8c030" strokeWidth="5" />
    <path d="M26 10a12 12 0 016 14" fill="none" stroke="#48b040" strokeWidth="5" />
    <path d="M20 24V14" stroke="#eee" strokeWidth="2" />
    <path d="M12 26h16v6H12z" fill="#444" />
  </>],
  wrench: [false, <>
    <path d="M8 34l17-17" stroke="#7c8a9c" strokeWidth="6" strokeLinecap="round" />
    <path d="M33 5a8 8 0 11-11 11l1-6 6 1 3-2z" fill="#7c8a9c" />
    <path d="M29 11l6-5" stroke="#d5e2f0" strokeWidth="5" />
  </>],
  refresh: [true, <>
    <path d="M28 11A12 12 0 1030 27" fill="none" stroke="url(#blue)" strokeWidth="5" />
    <path d="M33 7v12H21z" fill="#4a86cc" />
  </>],
  newpage: [false, <>{page}<circle cx="30" cy="9" r="7" fill="url(#green)" /><path d="M30 5v8M26 9h8" stroke="#fff" strokeWidth="2" /></>],
  importpage: [false, <>{page}<path d="M16 9v6M13 13l3 4 3-4M14 22h12M14 26h9" fill="none" stroke="#4a90d8" strokeWidth="2" /><path d="M27 21v9h-5l7.500 8 7.500-8h-5v-9z" fill="#2a8be0" /></>],
  copypage: [false, <>
    <path d="M7 5h12l4 4v20H7z" fill="url(#silver)" stroke="#9fb0c4" />
    <path d="M17 12h12l6 6v16H17z" fill="#f8ecc4" stroke="#c9a860" />
    <path d="M20 20h11M20 24h11M20 28h8" stroke="#d0bc88" strokeWidth="1.500" />
    <path d="M11 30q0 6 7 6" fill="none" stroke="#f0a828" strokeWidth="3" />
  </>],
  editpage: [false, <>
    <rect x="5" y="9" width="28" height="23" rx="4" fill="url(#silver)" stroke="#4c5562" strokeWidth="2" />
    <path d="M16 26l2-6L31 8l5 5-13 11z" fill="#f0a828" stroke="#8a5a10" />
    <path d="M31 8l3-3 5 5-3 3z" fill="#e04848" />
  </>],
  delpage: [false, <>{page}<path d="M31 27l-8 8h8z" fill="#c08080" /><circle cx="29" cy="9" r="7" fill="url(#red)" /><path d="M26 6l6 6m0-6l-6 6" stroke="#fff" strokeWidth="2" /></>],
  left: [false, <path d="M5 20L19 7v8h16v10H19v8z" fill="url(#gold)" stroke="#8a7440" strokeWidth="1.500" />],
  right: [false, <path d="M35 20L21 7v8H5v10h16v8z" fill="#2f9bf0" stroke="#4a6a8a" strokeWidth="1.500" />],
};

function Icon({ name, size }) {
  const [white, drawing] = icons[name];
  return (
    <svg width={size} height={size} viewBox="0 0 40 40" aria-hidden="true">
      <rect x=".5" y="1.500" width="39" height="38" rx="7" fill="#c9ced8" />
      <rect x=".5" y=".5" width="39" height="38" rx="7" fill={white ? "url(#tileWhite)" : "url(#tile)"} />
      {drawing}
    </svg>
  );
}

/****************** styled components ***************/

const GlobalStyle = createGlobalStyle`
  * { box-sizing: border-box; }
  body {
    margin: 0;
    font: 14px/20px "Open Sans", "Noto Sans", sans-serif;
    color: #3c3c3c;
  }
  button, input {
    font: inherit;
    color: inherit;
    padding: 0;
    border: 0;
    background: none;
    border-radius: 0;
  }
  svg { display: block; flex: none; }
`;

const HiddenSvg = styled.svg`
  position: absolute;
  width: 0;
  height: 0;
`;

const Shell = styled.div`
  display: flex;
  flex-direction: column;
  height: 100vh;
  background: #f5f5f5;
  overflow: hidden;
`;

const MenuBar = styled.div`
  display: flex;
  align-items: center;
  height: 28px;
  padding: 4px 0 0 2px;
  background: #d9d9d9;
  border-bottom: 1px solid #f5f5f5;
`;

const TabBar = styled.div`
  display: flex;
  align-items: center;
  height: 30px;
  padding: 5px 0 0 3px;
  background: #d9d9d9;
`;

const MenuButton = styled.button`
  padding: 0 ${(props) => (props.$tight ? 12 : 13)}px;
  white-space: nowrap;
`;

const WindowButtons = styled.div`
  display: flex;
  gap: 27px;
  margin-left: auto;
  padding: 0 13px 4px 0;

  svg {
    fill: none;
    stroke: #333;
    stroke-width: 1.2;
  }
`;

const ContextTabs = styled.div`
  display: flex;
  margin-left: 7px;
`;

const ContextTab = styled.button`
  width: ${(props) => props.$width}px;
  height: 25px;
  font-weight: 700;
  white-space: nowrap;
  background: ${(props) => props.$color};
  ${(props) => props.$active && css`box-shadow: inset 0 4px #4fdc80;`}
`;

const CollapseButton = styled.button`
  margin-left: 26px;
`;

const Ribbon = styled.div`
  display: flex;
  height: 125px;
  border-bottom: 1px solid #4fdc80;
`;

const RibbonGroup = styled.section`
  display: flex;
  flex-direction: column;
  ${(props) => (props.$width ? css`width: ${props.$width}px;` : css`flex: 1;`)}
  margin: 1px 0;
  padding: 8px 2px 0;
  border-right: 1px solid #d4d4d4;

  &:last-child {
    border-right: 0;
  }
`;

const GroupItems = styled.div`
  display: flex;
  flex: 1;
`;

const GroupTitle = styled.div`
  height: 20px;
  text-align: center;
`;

const BigButton = styled.button`
  display: flex;
  flex-direction: column;
  align-items: center;
  flex: none;
  width: ${(props) => props.$width}px;
  white-space: nowrap;

  svg + span {
    margin-top: 4px;
  }
`;

const SmallColumn = styled.div`
  display: flex;
  flex-direction: column;
  gap: ${(props) => (props.$two ? 11 : 10)}px;
  padding: ${(props) => (props.$two ? 18 : 3)}px 0 0 4px;
  ${(props) => props.$width && css`width: ${props.$width}px;`}
`;

const SmallButton = styled.button`
  display: flex;
  align-items: center;
  gap: 7px;
  height: 20px;
  white-space: nowrap;
`;

const DocTabs = styled.div`
  display: flex;
  align-items: flex-end;
  flex: none;
  height: 32px;
  padding-left: 19px;
  background: #d9d9d9;
`;

const BurgerButton = styled.button`
  display: grid;
  place-items: center;
  height: 30px;
  margin-right: 13px;
`;

const SlashSvg = styled.svg`
  align-self: center;
`;

const DocTab = styled.button`
  height: 29px;
  padding: 0 11px 0 10px;
  margin-right: ${(props) => (props.$wide ? 13 : 0)}px;
`;

const ActiveDocTab = styled.div`
  display: flex;
  align-items: center;
  justify-content: center;
  gap: 11px;
  width: 118px;
  height: 30px;
  font-weight: 700;
  background: #f5f5f5;
  clip-path: polygon(12px 0, 100% 0, calc(100% - 12px) 100%, 0 100%);
`;

const PlusBtn = styled.button`
  display: grid;
  place-items: center;
  height: 30px;
  margin: 0 12px;
`;

const Workspace = styled.main`
  display: grid;
  grid-template-columns: 26px 348px minmax(0, 1fr) 514px;
  grid-template-rows: minmax(0, 1fr);
  column-gap: 4px;
  flex: 1;
  min-height: 0;
`;

const PropertiesStrip = styled.aside`
  display: flex;
  flex-direction: column;
  align-items: center;
  justify-content: space-between;
  margin: 12px 0 11px;
  padding: 3px 0 321px;
  border: 1px solid #b4b4b4;

  span {
    writing-mode: vertical-rl;
    transform: rotate(180deg);
  }
`;

const Grip = styled.i`
  flex: none;
  width: ${(props) => props.$width}px;
  height: ${(props) => props.$height}px;
  background: conic-gradient(from -90deg, #777 90deg, transparent 0) 0 0 / 2px 2px;
`;

const Panel = styled.section`
  display: flex;
  flex-direction: column;
  min-width: 0;
  margin: 8px 0;
  background: ${(props) => (props.$wide ? "#f0f4f9" : "#f9fafc")};
`;

const PanelHeader = styled.h2`
  display: flex;
  align-items: center;
  gap: 7px;
  flex: none;
  height: 27px;
  margin: 0;
  padding: 0 8px 2px;
  font-size: 14px;
  font-weight: 400;
  background: #d9d9d9;
  border-radius: 4px 4px 0 0;
`;

const NavBody = styled.div`
  display: flex;
  flex-direction: column;
  flex: 1;
  min-height: 0;
  padding: 14px 8px 14px 10px;
`;

const ToolRow = styled.div`
  display: flex;
  align-items: center;
  gap: 12px;
  height: 38px;
  margin: 0 0 5px 6px;
`;

const ToolButton = styled.button`
  & + & {
    margin-left: 3px;
  }
`;

const ToolSep = styled.i`
  width: 2px;
  height: 38px;
  background: #cbd8e6;
`;

const TableFrame = styled.div`
  flex: 1;
  min-height: 0;
  margin-top: 4px;
  padding: 2px;
  background: #f0f4f9;
  border: 1px solid #c3d0df;
`;

const PageTable = styled.table`
  width: 100%;
  table-layout: fixed;
  border-collapse: collapse;
  font-size: 15px;
  color: #111827;

  th {
    height: 24px;
    padding: 0 0 1px;
    font-weight: 400;
    background: linear-gradient(#fff, #f6f7f9);
    border-right: 1px solid #ccc;
    border-bottom: 1px solid #ccc;
  }

  th:nth-child(1) { width: 52px; }
  th:nth-child(2) { width: 155px; }
  th:nth-child(3) { width: 87px; }
  th:nth-child(4) { border-right: 0; }

  td {
    height: 29px;
    padding: 0 0 0 12px;
  }

  td:first-child {
    padding-left: 13px;
  }

  .selected {
    background: linear-gradient(#4abbf1 50%, #0ea5e9 50%);
  }
`;

const ProjectLine = styled.p`
  display: flex;
  gap: 11px;
  margin: 10px 2px 7px;
  font-size: 13px;
  color: #64748b;
  white-space: nowrap;
`;

const CommandLabel = styled.label`
  margin: 0 2px 4px;
  font-size: 13px;
  font-weight: 600;
  color: #64748b;
`;

const LogFrame = styled.div`
  position: relative;
  flex: none;
  height: 136px;
  padding: 6px 20px 0 10px;
  background: #fff;
  border: 1px solid #c3cedd;
`;

const Log = styled.pre`
  margin: 0;
  overflow: hidden;
  font: 13px/16px "Liberation Mono", monospace;
  color: #64748b;
`;

const VThumb = styled.i`
  position: absolute;
  top: 18px;
  right: 3px;
  width: 7px;
  height: 102px;
  border-radius: 4px;
  background: #c8c8c8;
`;

const HThumb = styled.i`
  position: absolute;
  left: 3px;
  bottom: 2px;
  width: 166px;
  height: 7px;
  border-radius: 4px;
  background: #c8c8c8;
`;

const CommandBar = styled.div`
  display: flex;
  align-items: center;
  flex: none;
  height: 40px;
  margin-top: 6px;
  padding: 0 5px 0 9px;
  background: #fff;
  border: 1px solid #0ea5e9;
  border-radius: 5px;

  input {
    flex: 1;
    min-width: 0;
    height: 30px;
    outline: 0;
  }

  button {
    display: grid;
    place-items: center;
    width: 39px;
    height: 30px;
    background: #0ea5e9;
  }
`;

const Canvas = styled.div`
  margin: 5px 0;
  background: #fff;
`;

const Sheet = styled.svg`
  width: 100%;
  height: 100%;
`;

const SearchRow = styled.div`
  display: flex;
  align-items: center;
  justify-content: space-between;
  flex: none;
  height: 58px;
  padding: 1px 12px 0 13px;
  color: #0f172a;
  border-bottom: 1px solid #c3d0e0;

  input[type="text"] {
    width: 330px;
    height: 35px;
    background: #f9fafc;
    border: 1px solid #c3d0e0;
  }

  label {
    display: flex;
    align-items: center;
    gap: 7px;
  }

  input[type="checkbox"] {
    appearance: none;
    width: 17px;
    height: 17px;
    margin: 0;
    background: #fff;
    border: 1px solid #666;
  }
`;

const Tree = styled.div`
  position: relative;
  flex: none;
  height: 268px;
  padding: 3px 13px 0 1px;
  overflow: hidden;
`;

const TreeRow = styled.button`
  display: flex;
  align-items: center;
  width: 100%;
  height: 42px;
  padding: 0 16px;
  color: #0f172a;

  span + span {
    margin-left: 9px;
  }

  svg {
    margin-right: 5px;
  }

  ${({ $kind }) =>
    $kind === "all" &&
    css`
      padding-left: 20px;
      font-weight: 600;
      color: #3ecf8e;

      svg {
        margin-right: 7px;
      }
    `}

  ${({ $kind }) =>
    ($kind === "open" || $kind === "closed") &&
    css`
      font-weight: 600;
    `}

  ${({ $kind }) =>
    $kind === "open" &&
    css`
      background: #e9ecee;
      border: 1px solid #d8dadc;
    `}

  ${({ $kind }) =>
    $kind === "sub" &&
    css`
      height: 37px;
      padding-left: 36px;
      font-size: 13px;
      color: #64748b;
    `}
`;

const ScrollThumb = styled.i`
  position: absolute;
  right: 2px;
  top: ${(props) => props.$top}px;
  width: 7px;
  height: ${(props) => props.$height}px;
  border-radius: 4px;
  background: #c1c4c8;
`;

const Splitter = styled.div`
  flex: none;
  height: 7px;
  background: #cbd5e1;
`;

const Gallery = styled.div`
  position: relative;
  flex: 1;
  min-height: 0;
  overflow: hidden;
  background: #f9fafc;
`;

const Cards = styled.div`
  display: grid;
  grid-template-columns: repeat(3, 1fr);
  gap: 10px;
  padding: 9px 34px 0 13px;
`;

const Card = styled.article`
  display: flex;
  flex-direction: column;
  height: 166px;
  min-width: 0;
  padding: 6px 2px 6px 7px;
  background: #f0f4f9;
  border: 1px solid #c3d0e0;
  border-radius: 7px;

  svg {
    margin: 0 8px 5px 3px;
    background: #fff;
  }

  strong {
    overflow: hidden;
    font-size: 12px;
    font-weight: 600;
    color: #0f172a;
    text-overflow: ellipsis;
    white-space: nowrap;
  }

  small {
    font-size: 12px;
    line-height: 17px;
    color: #3ecf8e;
    white-space: pre;
  }
`;

const PanelStatus = styled.div`
  flex: none;
  height: 32px;
  padding: 5px 13px;
  font-size: 12px;
  color: #64748b;
  border-top: 1px solid #c3d0e0;
`;

const Footer = styled.footer`
  display: flex;
  flex: none;
  height: 36px;
  padding-left: 19px;
  background: #d9d9d9;

  & > svg {
    margin-bottom: 6px;
  }
`;

const LayoutTab = styled.button`
  height: 30px;
  padding: 0 10px;

  ${(props) =>
    props.$active &&
    css`
      width: 80px;
      margin-left: -2px;
      font-weight: 700;
      background: #f5f5f5;
      clip-path: polygon(12px 0, 100% 0, calc(100% - 12px) 100%, 0 100%);
    `}
`;

const Status = styled.div`
  display: flex;
  gap: 1px;
  height: 30px;
  margin: 2px 0 0 auto;
`;

const StatusCell = styled.div`
  display: flex;
  align-items: center;
  justify-content: space-around;
  width: ${(props) => props.$width}px;
  margin-left: ${(props) => (props.$gap ? 2 : 0)}px;
  background: #f5f5f5;
`;

const StatusButton = styled.button`
  display: grid;
  place-items: center;
  width: ${(props) => (props.$slim ? "18px" : "auto")};
  height: 28px;

  ${(props) =>
    props.$active &&
    css`
      background: #cce4fc;
      box-shadow: inset 0 0 0 1px #5b86b5;
    `}
`;
